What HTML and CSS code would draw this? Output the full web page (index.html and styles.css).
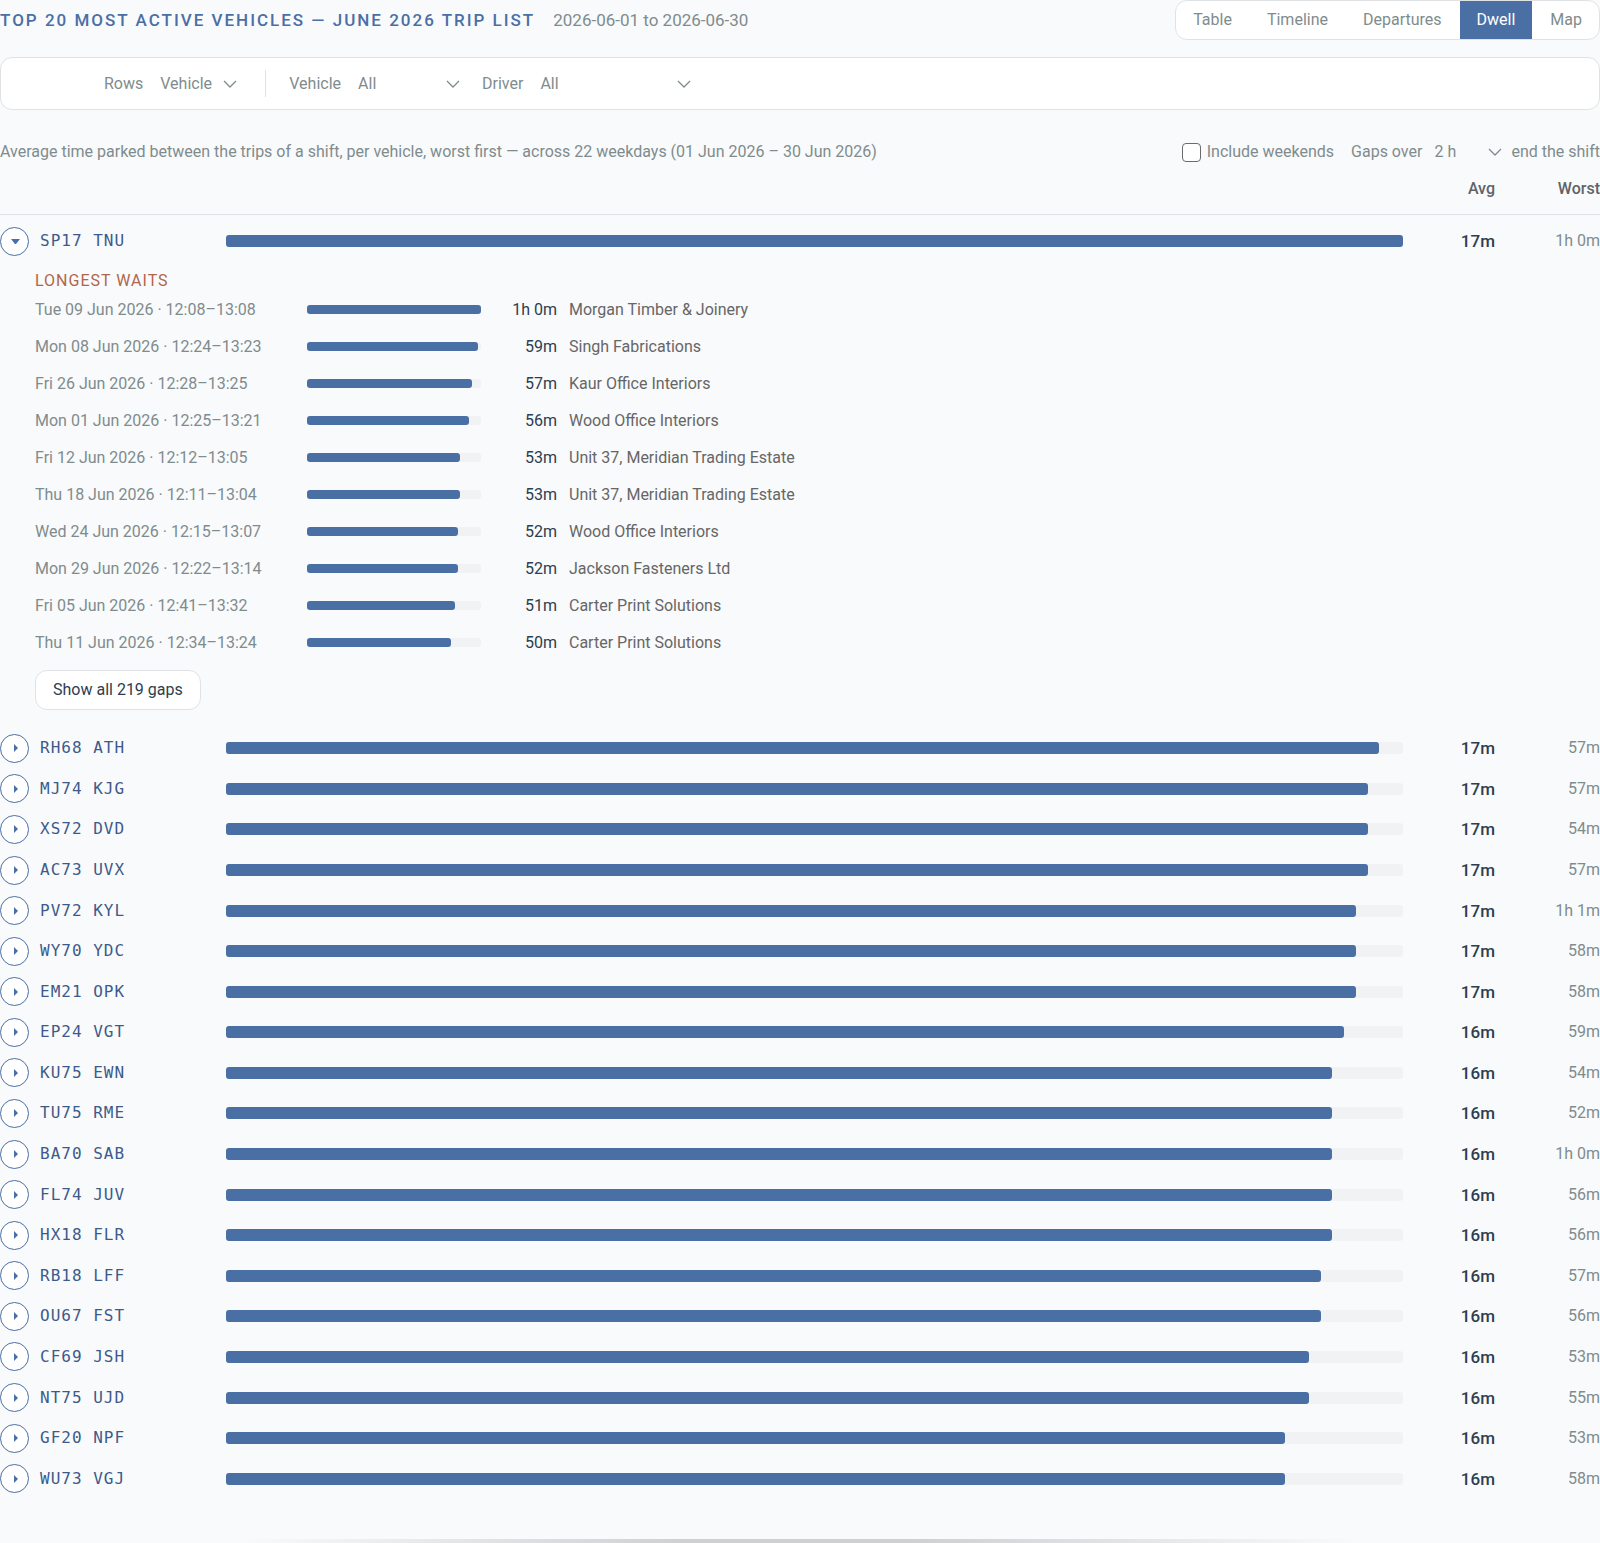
FILE: index.html
```html
<!DOCTYPE html>
<html lang="en">
<head>
    <meta charset="UTF-8">
    <meta name="viewport" content="width=device-width, initial-scale=1.0">
    <title>Trip List - Dwell</title>
    <link rel="stylesheet" href="styles.css">
</head>
<body>
    <header class="page-header">
        <h1>Top 20 most active vehicles — June 2026 trip list</h1>
        <span class="period">2026-06-01 to 2026-06-30</span>
        <nav class="tabs">
            <button type="button">Table</button>
            <button type="button">Timeline</button>
            <button type="button">Departures</button>
            <button type="button" class="active">Dwell</button>
            <button type="button">Map</button>
        </nav>
    </header>

    <form class="filters">
        <div class="filter-group rows-group">
            <label for="rows">Rows</label>
            <select id="rows" class="select-rows"><option>Vehicle</option><option>Driver</option></select>
        </div>
        <div class="filter-group">
            <label for="vehicle">Vehicle</label>
            <select id="vehicle" class="select-vehicle"><option>All</option></select>
        </div>
        <div class="filter-group">
            <label for="driver">Driver</label>
            <select id="driver" class="select-driver"><option>All</option></select>
        </div>
    </form>

    <div class="summary">
        <p>Average time parked between the trips of a shift, per vehicle, worst first — across 22 weekdays (01 Jun 2026 – 30 Jun 2026)</p>
        <div class="options">
            <label class="check"><input type="checkbox" id="weekends">Include weekends</label>
            <div class="gap-option">
                <label for="gap">Gaps over</label>
                <select id="gap" class="select-gap"><option>2 h</option></select>
                <span>end the shift</span>
            </div>
        </div>
    </div>

    <div class="row list-head">
        <span class="head-avg">Avg</span>
        <span class="head-worst">Worst</span>
    </div>

    <main class="vehicles" id="vehicles"></main>
    <footer class="page-end"></footer>

    <script src="script.js"></script>
</body>
</html>
```
FILE: styles.css
```css
* {
    box-sizing: border-box;
}

body {
    margin: 0;
    min-height: 100vh;
    display: flex;
    flex-direction: column;
    font-family: Roboto, "Liberation Sans", sans-serif;
    font-size: 16px;
    line-height: 20px;
    color: #7f8c8d;
    background: #f9fafc;
}

button,
select,
input {
    font: inherit;
    margin: 0;
}

/* Header */
.page-header {
    display: flex;
    align-items: center;
    gap: 18px;
    height: 40px;
}

.page-header h1 {
    margin: 0;
    font-size: 17px;
    font-weight: 500;
    letter-spacing: 2px;
    text-transform: uppercase;
    color: #4a6fa5;
}

.period {
    font-size: 17px;
}

.tabs {
    display: flex;
    gap: 1px;
    height: 40px;
    margin-left: auto;
    background: white;
    border: 1px solid #dfe3e6;
    border-radius: 12px;
    overflow: hidden;
}

.tabs button {
    padding: 0 17px;
    border: none;
    background: none;
    color: #7f8c8d;
    cursor: pointer;
}

.tabs .active {
    background: #4a6fa5;
    color: white;
}

/* Filters */
.filters {
    display: flex;
    align-items: center;
    height: 53px;
    margin-top: 17px;
    padding-left: 103px;
    background: white;
    border: 1px solid #dfe3e6;
    border-radius: 12px;
}

.filter-group {
    display: flex;
    align-items: center;
    gap: 17px;
    margin-right: 22px;
}

.rows-group {
    height: 27px;
    padding-right: 28px;
    margin-right: 23px;
    border-right: 1px solid #dfe3e6;
}

select {
    appearance: none;
    padding: 0;
    border: none;
    border-radius: 0;
    color: #7f8c8d;
    background: url("data:image/svg+xml,%3Csvg xmlns='http://www.w3.org/2000/svg' width='14' height='8' viewBox='0 0 14 8'%3E%3Cpath d='M1 1l6 6 6-6' fill='none' stroke='%237f8c8d' stroke-width='1.3'/%3E%3C/svg%3E") no-repeat right center;
}

.select-rows {
    width: 77px;
}

.select-vehicle {
    width: 102px;
}

.select-driver {
    width: 151px;
}

.select-gap {
    width: 71px;
    padding-left: 3px;
}

/* Summary line */
.summary {
    display: flex;
    justify-content: space-between;
    align-items: center;
    margin-top: 32px;
}

.summary p {
    margin: 0;
}

.options,
.gap-option,
.check {
    display: flex;
    align-items: center;
}

.options {
    gap: 17px;
}

.gap-option {
    gap: 9px;
}

.check {
    gap: 6px;
}

.check input {
    appearance: none;
    width: 19px;
    height: 19px;
    background: white;
    border: 1px solid #6b6b6b;
    border-radius: 4px;
}

/* Vehicle list */
.row {
    display: grid;
    grid-template-columns: 214px 1fr 80px 93px;
    column-gap: 12px;
    align-items: center;
}

.list-head {
    height: 53px;
    padding-top: 2px;
    font-weight: 500;
    color: #5f6368;
    border-bottom: 1px solid #dfe3e6;
}

.head-avg {
    grid-column: 3;
    text-align: right;
}

.head-worst {
    text-align: right;
}

.vehicles {
    flex: 1;
    display: flex;
    flex-direction: column;
    padding-top: 6px;
}

.vehicle {
    flex: 1 0 40px;
    display: flex;
    flex-direction: column;
}

.vehicle.open {
    flex: none;
}

.vehicle .row {
    flex: 1 0 40px;
}

.name {
    display: flex;
    align-items: center;
    gap: 11px;
}

.toggle {
    display: flex;
    align-items: center;
    justify-content: center;
    width: 29px;
    height: 29px;
    padding: 0;
    background: white;
    border: 1px solid #4a6fa5;
    border-radius: 50%;
    cursor: pointer;
}

.toggle svg {
    width: 12px;
    height: 12px;
    fill: #4a6fa5;
}

.plate {
    font-family: "DejaVu Sans Mono", monospace;
    letter-spacing: 1px;
    color: #3d5a8a;
}

.track {
    height: 12px;
    background: #f1f2f4;
    border-radius: 3px;
}

.fill {
    height: 100%;
    background: #4a6fa5;
    border-radius: 3px;
}

.avg {
    font-size: 17px;
    font-weight: 500;
    text-align: right;
    color: #2c3e50;
}

.worst {
    text-align: right;
}

/* Longest waits of the open vehicle */
.waits {
    padding: 10px 0 18px 35px;
}

.waits h2 {
    margin: 0;
    font-size: 16px;
    font-weight: 400;
    letter-spacing: 1px;
    text-transform: uppercase;
    color: #b0664a;
}

.wait {
    display: grid;
    grid-template-columns: 260px 174px 64px 1fr;
    column-gap: 12px;
    align-items: center;
    height: 37px;
}

.wait .track {
    height: 9px;
}

.wait .length {
    text-align: right;
    color: #2c3e50;
}

.wait .place {
    color: #666666;
}

.show-all {
    height: 40px;
    margin-top: 9px;
    padding: 0 17px;
    color: #2c3e50;
    background: white;
    border: 1px solid #dfe3e6;
    border-radius: 12px;
    cursor: pointer;
}

/* Soft edge that closes the page */
.page-end {
    display: flex;
    align-items: flex-end;
    justify-content: center;
    height: 44px;
}

.page-end::after {
    content: "";
    width: 70%;
    height: 4px;
    background: linear-gradient(to right, transparent, #cdd1d2 40%, #cdd1d2 60%, transparent);
}
```
FILE: script.js
```js
// plate, bar %, average, worst
const vehicles = [
    ['SP17 TNU', 100, '17m', '1h 0m'],
    ['RH68 ATH', 98, '17m', '57m'],
    ['MJ74 KJG', 97, '17m', '57m'],
    ['XS72 DVD', 97, '17m', '54m'],
    ['AC73 UVX', 97, '17m', '57m'],
    ['PV72 KYL', 96, '17m', '1h 1m'],
    ['WY70 YDC', 96, '17m', '58m'],
    ['EM21 OPK', 96, '17m', '58m'],
    ['EP24 VGT', 95, '16m', '59m'],
    ['KU75 EWN', 94, '16m', '54m'],
    ['TU75 RME', 94, '16m', '52m'],
    ['BA70 SAB', 94, '16m', '1h 0m'],
    ['FL74 JUV', 94, '16m', '56m'],
    ['HX18 FLR', 94, '16m', '56m'],
    ['RB18 LFF', 93, '16m', '57m'],
    ['OU67 FST', 93, '16m', '56m'],
    ['CF69 JSH', 92, '16m', '53m'],
    ['NT75 UJD', 92, '16m', '55m'],
    ['GF20 NPF', 90, '16m', '53m'],
    ['WU73 VGJ', 90, '16m', '58m']
];

const waits = [
    ['Tue 09 Jun 2026 · 12:08–13:08', 100, '1h 0m', 'Morgan Timber &amp; Joinery'],
    ['Mon 08 Jun 2026 · 12:24–13:23', 98, '59m', 'Singh Fabrications'],
    ['Fri 26 Jun 2026 · 12:28–13:25', 95, '57m', 'Kaur Office Interiors'],
    ['Mon 01 Jun 2026 · 12:25–13:21', 93, '56m', 'Wood Office Interiors'],
    ['Fri 12 Jun 2026 · 12:12–13:05', 88, '53m', 'Unit 37, Meridian Trading Estate'],
    ['Thu 18 Jun 2026 · 12:11–13:04', 88, '53m', 'Unit 37, Meridian Trading Estate'],
    ['Wed 24 Jun 2026 · 12:15–13:07', 87, '52m', 'Wood Office Interiors'],
    ['Mon 29 Jun 2026 · 12:22–13:14', 87, '52m', 'Jackson Fasteners Ltd'],
    ['Fri 05 Jun 2026 · 12:41–13:32', 85, '51m', 'Carter Print Solutions'],
    ['Thu 11 Jun 2026 · 12:34–13:24', 83, '50m', 'Carter Print Solutions']
];

function bar(percent) {
    return `<div class="track"><div class="fill" style="width: ${percent}%"></div></div>`;
}

function waitList() {
    const rows = waits.map(([when, percent, length, place]) => `
        <div class="wait">
            <span>${when}</span>
            ${bar(percent)}
            <span class="length">${length}</span>
            <span class="place">${place}</span>
        </div>`).join('');
    return `<div class="waits"><h2>Longest waits</h2>${rows}
        <button type="button" class="show-all">Show all 219 gaps</button></div>`;
}

document.getElementById('vehicles').innerHTML = vehicles.map(([plate, percent, avg, worst], i) => `
    <section class="vehicle${i === 0 ? ' open' : ''}">
        <div class="row">
            <div class="name">
                <button type="button" class="toggle" aria-expanded="${i === 0}" aria-label="${plate}">
                    <svg viewBox="0 0 12 12"><path d="${i === 0 ? 'M2 4h9l-4 5h-1z' : 'M5 2l4 4-4 4z'}"/></svg>
                </button>
                <span class="plate">${plate}</span>
            </div>
            ${bar(percent)}
            <span class="avg">${avg}</span>
            <span class="worst">${worst}</span>
        </div>
        ${i === 0 ? waitList() : ''}
    </section>`).join('');
```
